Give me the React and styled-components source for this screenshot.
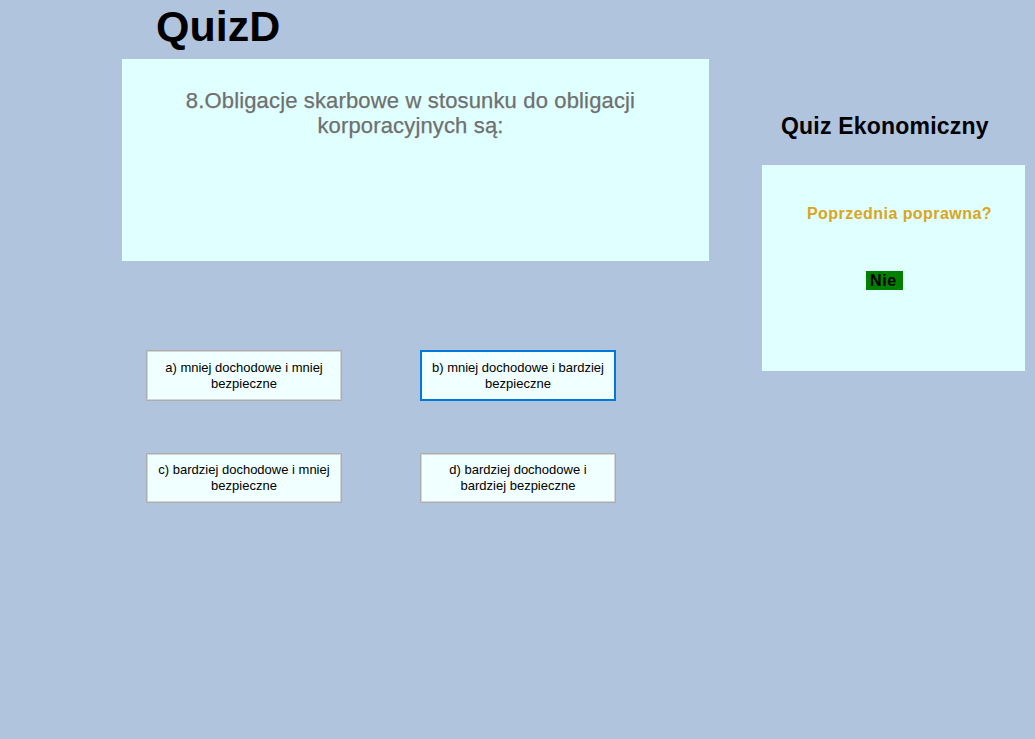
import React from "react";
import styled, { createGlobalStyle } from "styled-components";

const GlobalStyle = createGlobalStyle`
  html, body {
    margin: 0;
    padding: 0;
    background: #b0c4de;
  }
  body {
    font-family: "Liberation Sans", Arial, sans-serif;
    min-height: 739px;
  }
`;

const Page = styled.div`
  display: flex;
  align-items: flex-start;
  padding-left: 122px;
  min-height: 739px;
  box-sizing: border-box;
`;

const MainColumn = styled.div`
  width: 587px;
  display: flex;
  flex-direction: column;
`;

const Title = styled.h1`
  margin: 0;
  padding: 1px 0 0 34px;
  height: 58px;
  font-size: 43px;
  line-height: 50px;
  font-weight: bold;
  color: #000;
`;

const QuestionPanel = styled.div`
  height: 202px;
  background: #e0ffff;
  padding: 29px 44px 0 34px;
  box-sizing: border-box;
`;

const QuestionText = styled.p`
  margin: 0;
  text-align: center;
  font-size: 22px;
  line-height: 25px;
  letter-spacing: 0.15px;
  color: #6f6f6f;
  -webkit-text-stroke: 0.25px #6f6f6f;
`;

const Answers = styled.div`
  display: grid;
  grid-template-columns: 196px 196px;
  column-gap: 78px;
  row-gap: 52px;
  margin: 89px 0 0 24px;
`;

const AnswerButton = styled.button`
  height: ${(p) => (p.$short ? "50px" : "51px")};
  padding: 0 6px;
  background: #f0ffff;
  border: ${(p) => (p.$focused ? "2px solid #0078d7" : "1px solid #adadad")};
  box-shadow: ${(p) => (p.$focused ? "none" : "inset 0 0 0 1px #d4d4d4")};
  font-family: "Liberation Sans", Arial, sans-serif;
  font-size: 13px;
  line-height: 16px;
  color: #000;
  text-align: center;
  cursor: pointer;
`;

const SideColumn = styled.div`
  width: 263px;
  margin-left: 53px;
  display: flex;
  flex-direction: column;
`;

const SideTitle = styled.h2`
  margin: 0;
  padding: 113px 0 0 19px;
  height: 165px;
  box-sizing: border-box;
  font-size: 23px;
  line-height: 27px;
  font-weight: bold;
  letter-spacing: 0.2px;
  color: #000;
`;

const StatusPanel = styled.div`
  height: 206px;
  background: #e0ffff;
  padding: 39px 0 0 45px;
  box-sizing: border-box;
  display: flex;
  flex-direction: column;
  align-items: flex-start;
`;

const StatusLabel = styled.div`
  font-size: 16px;
  line-height: 19px;
  font-weight: bold;
  color: #daa520;
  letter-spacing: 0.45px;
`;

const StatusBadge = styled.div`
  margin: 48px 0 0 59px;
  height: 19px;
  padding: 0 6px 0 4px;
  background: #008000;
  font-size: 16px;
  line-height: 20px;
  font-weight: bold;
  color: #000;
  letter-spacing: 0.6px;
`;

const answers = [
  { text: "a) mniej dochodowe i mniej bezpieczne" },
  { text: "b) mniej dochodowe i bardziej bezpieczne", focused: true },
  { text: "c) bardziej dochodowe i mniej bezpieczne", short: true },
  { text: "d) bardziej dochodowe i bardziej bezpieczne", short: true },
];

export default function App() {
  return (
    <>
      <GlobalStyle />
      <Page>
        <MainColumn>
          <Title>QuizD</Title>
          <QuestionPanel>
            <QuestionText>
              8.Obligacje skarbowe w stosunku do obligacji korporacyjnych są:
            </QuestionText>
          </QuestionPanel>
          <Answers>
            {answers.map((a, i) => (
              <AnswerButton key={i} $focused={a.focused} $short={a.short}>
                {a.text}
              </AnswerButton>
            ))}
          </Answers>
        </MainColumn>
        <SideColumn>
          <SideTitle>Quiz Ekonomiczny</SideTitle>
          <StatusPanel>
            <StatusLabel>Poprzednia poprawna?</StatusLabel>
            <StatusBadge>Nie</StatusBadge>
          </StatusPanel>
        </SideColumn>
      </Page>
    </>
  );
}
